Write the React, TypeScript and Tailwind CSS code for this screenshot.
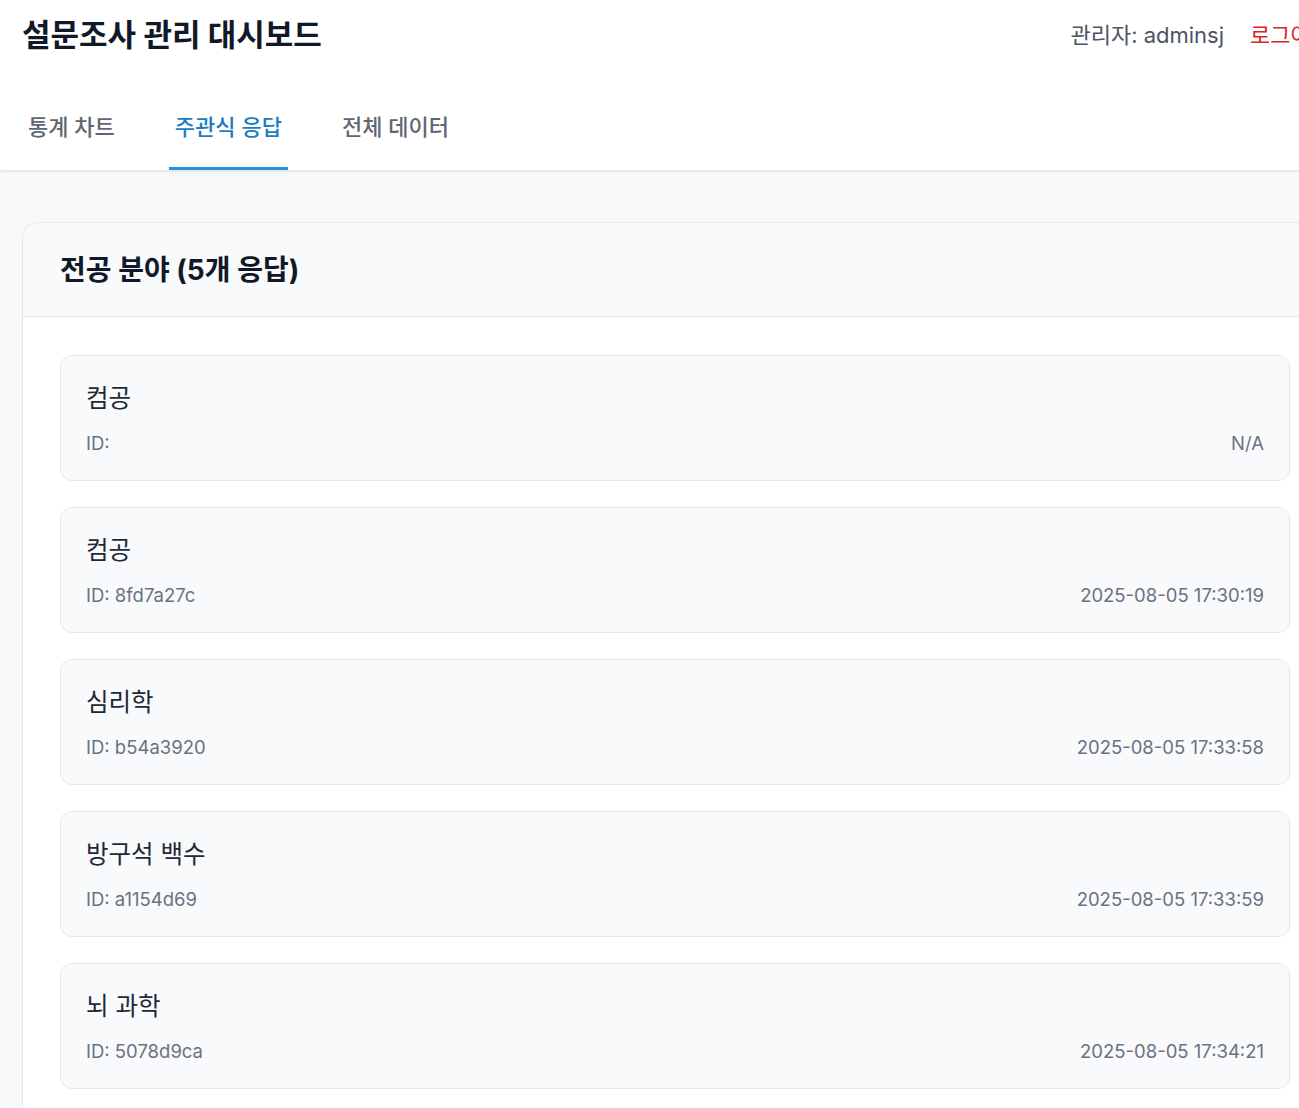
const tabs = [
  { label: "통계 차트", active: false },
  { label: "주관식 응답", active: true },
  { label: "전체 데이터", active: false },
];

const answers = [
  { text: "컴공", id: "", time: "N/A" },
  { text: "컴공", id: "8fd7a27c", time: "2025-08-05 17:30:19" },
  { text: "심리학", id: "b54a3920", time: "2025-08-05 17:33:58" },
  { text: "방구석 백수", id: "a1154d69", time: "2025-08-05 17:33:59" },
  { text: "뇌 과학", id: "5078d9ca", time: "2025-08-05 17:34:21" },
];

export default function App() {
  return (
    <div className="w-[1350px] min-h-screen bg-[#f8f9fb] font-['Inter','Noto_Sans_CJK_KR',sans-serif]">
      <header className="bg-white pl-[22px] pr-[19px] shadow-[0_1px_3px_rgba(0,0,0,0.08)] border-b border-[#e5e7eb]">
        <div className="flex h-[70px] items-center justify-between">
          <h1 className="text-[31px] font-bold text-[#111827]">설문조사 관리 대시보드</h1>
          <div className="flex items-center gap-[26px] text-[22px]">
            <span className="text-[#4b5563]">관리자: adminsj</span>
            <button className="text-[#dc2626]">로그아웃</button>
          </div>
        </div>
        <nav className="flex gap-[48px]">
          {tabs.map((tab) => (
            <button
              key={tab.label}
              className={
                tab.active
                  ? "px-[6px] pt-[43px] pb-[26px] border-b-[3px] border-[#1e96dc] text-[22px] leading-[28px] font-medium text-[#1c7cc2]"
                  : "px-[6px] pt-[43px] pb-[26px] border-b-[3px] border-transparent text-[22px] leading-[28px] font-medium text-[#5f6672]"
              }
            >
              {tab.label}
            </button>
          ))}
        </nav>
      </header>

      <main className="px-[22px] pt-[51px]">
        <section className="rounded-[16px] border border-[#e5e7eb] bg-white">
          <div className="flex h-[94px] items-center rounded-t-[16px] border-b border-[#e5e7eb] bg-[#f8fafc] px-[37px]">
            <h2 className="text-[28px] font-bold text-[#111827]">전공 분야 (5개 응답)</h2>
          </div>
          <div className="flex flex-col gap-[26px] px-[37px] pt-[38px] pb-[38px]">
            {answers.map((a, i) => (
              <div key={i} className="rounded-[12px] border border-[#e5e7eb] bg-[#f8fafc] px-[25px] pt-[26px] pb-[24px]">
                <p className="text-[24.5px] leading-[32px] text-[#1f2937]">{a.text}</p>
                <div className="mt-[16px] flex items-center justify-between text-[18.5px] leading-[26px] text-[#6b7280]">
                  <span>ID: {a.id}</span>
                  <span>{a.time}</span>
                </div>
              </div>
            ))}
          </div>
        </section>
      </main>
    </div>
  );
}
